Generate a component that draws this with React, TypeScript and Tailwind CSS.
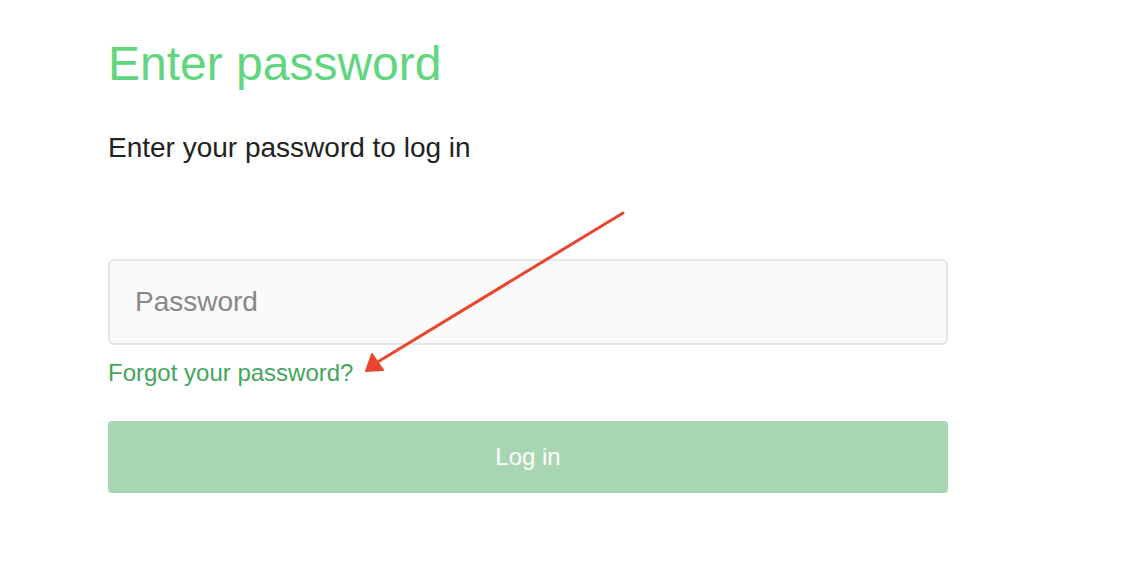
export default function App() {
  return (
    <div
      className="relative w-[1142px] h-[576px] bg-white overflow-hidden"
      style={{ fontFamily: '"Liberation Sans", Arial, sans-serif' }}
    >
      <div className="pl-[108px] pt-[34px] w-[948px]">
        <h1 className="text-[48px] leading-[60px] text-[#62d67f] font-normal">
          Enter password
        </h1>
        <p className="mt-[37px] text-[28px] leading-[34px] text-[#222222]">
          Enter your password to log in
        </p>
        <div className="mt-[94px] h-[86px] rounded-md border-2 border-[#e6e6e6] bg-[#fafafa] flex items-center pl-[25px]">
          <span className="text-[28px] text-[#888888]">Password</span>
        </div>
        <a className="block mt-[13px] text-[24px] leading-[30px] text-[#44a55c]">
          Forgot your password?
        </a>
        <button className="mt-[33px] w-full h-[72px] rounded-[4px] bg-[#a8d6b2] text-white text-[24px]">
          Log in
        </button>
      </div>

      <svg
        className="absolute left-0 top-0 pointer-events-none"
        width="1142"
        height="576"
        viewBox="0 0 1142 576"
      >
        <path
          d="M623 213 L376 363"
          stroke="#e9472d"
          strokeWidth="3"
          strokeLinecap="round"
          fill="none"
        />
        <path d="M372 354 L366 371 L383 370 Z" fill="#e9472d" stroke="#e9472d" strokeWidth="2" strokeLinejoin="round" />
      </svg>
    </div>
  );
}
